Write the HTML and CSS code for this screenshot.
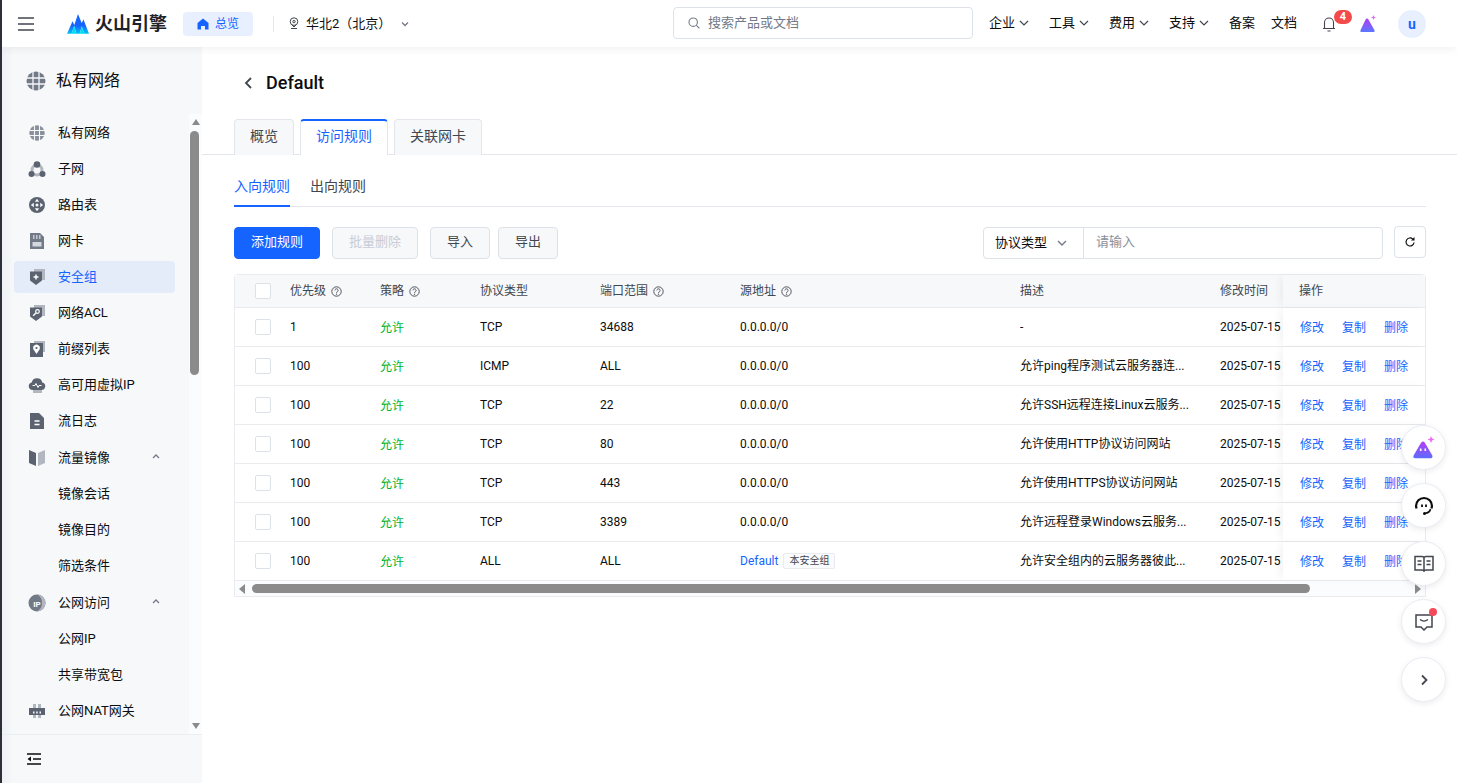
FILE: index.html
```html
<!DOCTYPE html>
<html lang="zh-CN">
<head>
<meta charset="utf-8">
<title>Default - 安全组</title>
<link rel="stylesheet" href="styles.css">
</head>
<body>
<div class="app">
  <header class="topbar">
    <svg class="burger" width="16" height="14" viewBox="0 0 16 14"><path d="M0 1h16M0 7h16M0 13h16" stroke="#42464e" stroke-width="1.400" fill="none"/></svg>
    <div class="logo">
      <svg width="24" height="22" viewBox="0 0 24 22"><defs><linearGradient id="lg" x1="0" y1="0" x2="0" y2="1"><stop offset="0" stop-color="#1664ff"/><stop offset=".6" stop-color="#1664ff"/><stop offset="1" stop-color="#00c8f5"/></linearGradient></defs><path d="M0 21.500 6 8l2 4 4-12 4 10 2-4 6 15.500h-5l-3-8-2 8H10L8 13l-3 8.500z" fill="url(#lg)"/><path d="M5 21.500 8 13l2 8.500zM14 21.500l2-8 3 8z" fill="#00dcf0"/></svg>
      <span class="logo-text">火山引擎</span>
    </div>
    <a class="home-pill">
      <svg width="12" height="12" viewBox="0 0 12 12"><path d="M6 .5 11.500 5v6.500H8V8H4v3.500H.5V5z" fill="#1664ff"/></svg>
      <span>总览</span>
    </a>
    <span class="vline"></span>
    <div class="region">
      <svg width="10" height="13" viewBox="0 0 10 13"><circle cx="5" cy="4.600" r="3.800" fill="none" stroke="#42464e" stroke-width="1"/><circle cx="5" cy="4.600" r="1.200" fill="none" stroke="#42464e"/><path d="M2 11.500h6" stroke="#42464e"/><path d="M3 8 5 10l2-2" fill="none" stroke="#42464e"/></svg>
      <span>华北2（北京）</span>
      <svg class="region-caret" width="8" height="6" viewBox="0 0 8 6"><path d="M1 1.500 4 4.500l3-3" fill="none" stroke="#737a87" stroke-width="1.300"/></svg>
    </div>
    <div class="search">
      <svg width="12" height="12" viewBox="0 0 12 12"><circle cx="5.200" cy="5.200" r="4.200" fill="none" stroke="#737a87" stroke-width="1.100"/><path d="m8.400 8.400 3 3" stroke="#737a87" stroke-width="1.100"/></svg>
      <span>搜索产品或文档</span>
    </div>
    <nav class="topnav">
      <a>企业<svg width="10" height="6" viewBox="0 0 10 6"><path d="m1 1 4 4 4-4" fill="none" stroke="#42464e" stroke-width="1.200"/></svg></a>
      <a>工具<svg width="10" height="6" viewBox="0 0 10 6"><path d="m1 1 4 4 4-4" fill="none" stroke="#42464e" stroke-width="1.200"/></svg></a>
      <a>费用<svg width="10" height="6" viewBox="0 0 10 6"><path d="m1 1 4 4 4-4" fill="none" stroke="#42464e" stroke-width="1.200"/></svg></a>
      <a>支持<svg width="10" height="6" viewBox="0 0 10 6"><path d="m1 1 4 4 4-4" fill="none" stroke="#42464e" stroke-width="1.200"/></svg></a>
      <a class="plain">备案</a>
      <a class="plain">文档</a>
    </nav>
    <div class="bell">
      <svg width="14" height="16" viewBox="0 0 14 16"><path d="M1 12.500h12M2.500 12.500V6.500a4.500 4.500 0 0 1 9 0v6M5.500 15h3" fill="none" stroke="#42464e" stroke-width="1.100"/></svg>
      <span class="badge">4</span>
    </div>
    <svg class="ai-top" width="18" height="18" viewBox="0 0 18 18"><defs><linearGradient id="g1" x1="0" y1="0" x2="0" y2="1"><stop offset="0" stop-color="#b23cf0"/><stop offset="1" stop-color="#5a78ff"/></linearGradient></defs><path d="M8 3.500c.6 0 1 .3 1.300.8l6.200 10.900c.4.800 0 1.800-1 1.800H2.500c-1 0-1.400-1-1-1.800L6.700 4.300c.3-.5.700-.8 1.300-.8z" fill="url(#g1)"/><path d="M14.500 0l.7 1.800 1.800.7-1.800.7-.7 1.800-.7-1.800-1.800-.7 1.800-.7z" fill="#e06cf5"/></svg>
    <span class="avatar">u</span>
  </header>

  <div class="body-row">
    <aside class="sidebar">
      <div class="side-title">
        <svg width="20" height="20" viewBox="0 0 20 20"><circle cx="10" cy="10" r="9.500" fill="#737a87"/><path d="M0 7h20M0 13h20M7 0v20M13 0v20" stroke="#f6f8fa" stroke-width="1.300"/></svg>
        <span>私有网络</span>
      </div>
      <div class="side-scroll">
        <ul class="menu">
          <li class="item"><svg width="18" height="18" viewBox="0 0 18 18"><circle cx="9" cy="9" r="7.700" fill="#8a909b"/><path d="M1 6.500h16M1 11.500h16M6.500 1v16M11.500 1v16" stroke="#f6f8fa" stroke-width="1.100"/></svg><span>私有网络</span></li>
          <li class="item"><svg width="18" height="18" viewBox="0 0 18 18"><circle cx="9" cy="10" r="5" fill="none" stroke="#b1b6bf" stroke-width="3"/><circle cx="9" cy="4.500" r="3.300" fill="#5c6370"/><circle cx="3.500" cy="14" r="3" fill="#5c6370"/><circle cx="14.500" cy="14" r="3" fill="#5c6370"/></svg><span>子网</span></li>
          <li class="item"><svg width="18" height="18" viewBox="0 0 18 18"><circle cx="9" cy="9" r="8" fill="#5c6370"/><path d="M9 2.800 11.200 5.800H6.800zM9 15.200l2.200-3H6.800zM2.800 9l3-2.200v4.400zM15.200 9l-3-2.200v4.400z" fill="#f6f8fa"/><circle cx="9" cy="9" r="1.500" fill="#f6f8fa"/></svg><span>路由表</span></li>
          <li class="item"><svg width="18" height="18" viewBox="0 0 18 18"><path d="M2 1h10l4 4v12H2z" fill="#737a87"/><path d="M4.500 10h9v4.500h-9z" fill="#d5d8dd"/><path d="M5 3h1.500v4H5zM8 3h1.500v4H8zM11 3h1.500v4H11z" fill="#c5c9d0"/></svg><span>网卡</span></li>
          <li class="item active"><svg width="18" height="18" viewBox="0 0 18 18"><path d="M6 1h11v11H6z" fill="#b1b6bf"/><path d="M2 3.500h12v9L8 17l-6-4.500z" fill="#5c6370"/><path d="M5.500 9h5M8 6.500v5" stroke="#fff" stroke-width="1.500"/></svg><span>安全组</span></li>
          <li class="item"><svg width="18" height="18" viewBox="0 0 18 18"><path d="M6 1h11v11H6z" fill="#b1b6bf"/><path d="M2 3.500h12v9L8 17l-6-4.500z" fill="#5c6370"/><circle cx="9.500" cy="7.500" r="1.800" fill="none" stroke="#fff" stroke-width="1.200"/><path d="M8.200 8.800 5.200 11.800" stroke="#fff" stroke-width="1.400"/></svg><span>网络ACL</span></li>
          <li class="item"><svg width="18" height="18" viewBox="0 0 18 18"><path d="M6 1h11v11H6z" fill="#b1b6bf"/><path d="M2 3h13v14H2z" fill="#5c6370"/><path d="M8.500 14 5.500 9.500a3.400 3.400 0 1 1 6 0z" fill="#fff"/><circle cx="8.500" cy="8" r="1.100" fill="#5c6370"/></svg><span>前缀列表</span></li>
          <li class="item"><svg width="18" height="18" viewBox="0 0 18 18"><path d="M5 14h9v3H5z" fill="#b1b6bf"/><path d="M4.500 14a3.800 3.800 0 0 1-.8-7.500 5.400 5.400 0 0 1 10.600 0A3.800 3.800 0 0 1 13.500 14z" fill="#5c6370"/><path d="M4.500 9.500h2.500l1-2 2 4 1-2h2.500" fill="none" stroke="#fff" stroke-width="1"/></svg><span>高可用虚拟IP</span></li>
          <li class="item"><svg width="18" height="18" viewBox="0 0 18 18"><path d="M2 1h9l5 5v11H2z" fill="#5c6370"/><path d="M6.500 9h5M6.500 12.500h5" stroke="#fff" stroke-width="1.300"/></svg><span>流日志</span></li>
          <li class="item parent"><svg width="18" height="18" viewBox="0 0 18 18"><path d="M1 1l7 3v13l-7-3z" fill="#5c6370"/><path d="M17 1l-7 3v13l7-3z" fill="#b1b6bf"/></svg><span>流量镜像</span><svg class="fold" width="8" height="5" viewBox="0 0 8 5"><path d="M1 4 4 1l3 3" fill="none" stroke="#737a87" stroke-width="1.300"/></svg></li>
          <li class="item sub"><span>镜像会话</span></li>
          <li class="item sub"><span>镜像目的</span></li>
          <li class="item sub"><span>筛选条件</span></li>
          <li class="item parent"><svg width="18" height="18" viewBox="0 0 18 18"><circle cx="9" cy="9" r="8.500" fill="#737a87"/><path d="M9 .5a8.500 8.500 0 0 1 0 17c3-2 5-4 5-8.500S12 2 9 .5z" fill="#b1b6bf"/><text x="9" y="12.500" class="ip-mark">IP</text></svg><span>公网访问</span><svg class="fold" width="8" height="5" viewBox="0 0 8 5"><path d="M1 4 4 1l3 3" fill="none" stroke="#737a87" stroke-width="1.300"/></svg></li>
          <li class="item sub"><span>公网IP</span></li>
          <li class="item sub"><span>共享带宽包</span></li>
          <li class="item"><svg width="18" height="18" viewBox="0 0 18 18"><path d="M5 2h3v14H5zM10 2h3v14h-3z" fill="#b1b6bf"/><path d="M1 6h16v7H1z" fill="#5c6370"/><path d="M5 9.500h1.500v2H5zM8.200 9.500h1.500v2H8.200zM11.500 9.500H13v2h-1.500z" fill="#f6f8fa"/></svg><span>公网NAT网关</span></li>
        </ul>
        <div class="side-bar">
          <i class="arrow up"></i>
          <div class="side-track"><div class="side-thumb"></div></div>
          <i class="arrow down"></i>
        </div>
      </div>
      <div class="side-foot">
        <svg width="14" height="12" viewBox="0 0 14 12"><path d="M0 1h14M6 6h8M0 11h14" stroke="#0c0d0e" stroke-width="1.300"/><path d="M4 3.500v5L.5 6z" fill="#0c0d0e"/></svg>
      </div>
    </aside>

    <main class="main">
      <div class="page-head">
        <svg width="9" height="12" viewBox="0 0 9 12"><path d="M7 1 2 6l5 5" fill="none" stroke="#42464e" stroke-width="1.800"/></svg>
        <h1>Default</h1>
      </div>
      <div class="tabs">
        <a class="tab tab-s">概览</a>
        <a class="tab on">访问规则</a>
        <a class="tab">关联网卡</a>
      </div>
      <div class="content">
        <div class="subtabs">
          <a class="subtab on">入向规则</a>
          <a class="subtab">出向规则</a>
        </div>
        <div class="toolbar">
          <button class="btn primary">添加规则</button>
          <button class="btn disabled">批量删除</button>
          <button class="btn short">导入</button>
          <button class="btn short">导出</button>
          <div class="filter">
            <div class="filter-sel"><span>协议类型</span><svg width="10" height="6" viewBox="0 0 10 6"><path d="m1 1 4 4 4-4" fill="none" stroke="#737a87" stroke-width="1.400"/></svg></div>
            <div class="filter-in">请输入</div>
          </div>
          <button class="refresh"><svg width="12" height="12" viewBox="0 0 12 12"><path d="M10 6.500A4 4 0 1 1 8.700 3" fill="none" stroke="#0c0d0e" stroke-width="1.200"/><path d="M10.500 1v3.500H7z" fill="#0c0d0e"/></svg></button>
        </div>

        <div class="table">
          <div class="row head">
            <div class="c-check"><i class="box"></i></div>
            <div class="cell">优先级<svg class="q" width="11" height="11" viewBox="0 0 11 11"><use href="#qm"/></svg></div>
            <div class="cell">策略<svg class="q" width="11" height="11" viewBox="0 0 11 11"><use href="#qm"/></svg></div>
            <div class="cell">协议类型</div>
            <div class="cell">端口范围<svg class="q" width="11" height="11" viewBox="0 0 11 11"><use href="#qm"/></svg></div>
            <div class="cell">源地址<svg class="q" width="11" height="11" viewBox="0 0 11 11"><use href="#qm"/></svg></div>
            <div class="cell">描述</div>
            <div class="cell">修改时间</div>
            <div class="ops head-ops">操作</div>
          </div>
          <div class="row">
            <div class="c-check"><i class="box"></i></div><div class="cell">1</div><div class="cell ok">允许</div><div class="cell">TCP</div><div class="cell">34688</div><div class="cell">0.0.0.0/0</div><div class="cell">-</div><div class="cell">2025-07-15</div>
            <div class="ops"><a>修改</a><a>复制</a><a>删除</a></div>
          </div>
          <div class="row">
            <div class="c-check"><i class="box"></i></div><div class="cell">100</div><div class="cell ok">允许</div><div class="cell">ICMP</div><div class="cell">ALL</div><div class="cell">0.0.0.0/0</div><div class="cell">允许ping程序测试云服务器连...</div><div class="cell">2025-07-15</div>
            <div class="ops"><a>修改</a><a>复制</a><a>删除</a></div>
          </div>
          <div class="row">
            <div class="c-check"><i class="box"></i></div><div class="cell">100</div><div class="cell ok">允许</div><div class="cell">TCP</div><div class="cell">22</div><div class="cell">0.0.0.0/0</div><div class="cell">允许SSH远程连接Linux云服务...</div><div class="cell">2025-07-15</div>
            <div class="ops"><a>修改</a><a>复制</a><a>删除</a></div>
          </div>
          <div class="row">
            <div class="c-check"><i class="box"></i></div><div class="cell">100</div><div class="cell ok">允许</div><div class="cell">TCP</div><div class="cell">80</div><div class="cell">0.0.0.0/0</div><div class="cell">允许使用HTTP协议访问网站</div><div class="cell">2025-07-15</div>
            <div class="ops"><a>修改</a><a>复制</a><a>删除</a></div>
          </div>
          <div class="row">
            <div class="c-check"><i class="box"></i></div><div class="cell">100</div><div class="cell ok">允许</div><div class="cell">TCP</div><div class="cell">443</div><div class="cell">0.0.0.0/0</div><div class="cell">允许使用HTTPS协议访问网站</div><div class="cell">2025-07-15</div>
            <div class="ops"><a>修改</a><a>复制</a><a>删除</a></div>
          </div>
          <div class="row">
            <div class="c-check"><i class="box"></i></div><div class="cell">100</div><div class="cell ok">允许</div><div class="cell">TCP</div><div class="cell">3389</div><div class="cell">0.0.0.0/0</div><div class="cell">允许远程登录Windows云服务...</div><div class="cell">2025-07-15</div>
            <div class="ops"><a>修改</a><a>复制</a><a>删除</a></div>
          </div>
          <div class="row">
            <div class="c-check"><i class="box"></i></div><div class="cell">100</div><div class="cell ok">允许</div><div class="cell">ALL</div><div class="cell">ALL</div><div class="cell"><a class="link">Default</a><span class="tag">本安全组</span></div><div class="cell">允许安全组内的云服务器彼此...</div><div class="cell">2025-07-15</div>
            <div class="ops"><a>修改</a><a>复制</a><a>删除</a></div>
          </div>
          <div class="hscroll">
            <i class="arrow left"></i>
            <div class="h-track"><div class="h-thumb"></div></div>
            <i class="arrow right"></i>
          </div>
        </div>
      </div>
    </main>
  </div>

  <div class="floats">
    <a class="fab"><svg width="26" height="26" viewBox="0 0 26 26"><defs><linearGradient id="g2" x1="0" y1="0" x2="0" y2="1"><stop offset="0" stop-color="#b93cf2"/><stop offset="1" stop-color="#5a6cff"/></linearGradient></defs><path d="M10 7 1 23h6z" fill="#bfeefb"/><path d="M12 6.500c.8 0 1.300.4 1.700 1l7.500 12.800c.8 1.400 0 3-1.500 3H4.300c-1.500 0-2.300-1.600-1.500-3l7.500-12.800c.4-.6.900-1 1.700-1z" fill="url(#g2)"/><path d="M9.700 13.500v2.500M14.300 13.500v2.500" stroke="#fff" stroke-width="1.600"/><path d="M20 1l1 2.600 2.600 1-2.600 1L20 8.200l-1-2.600-2.600-1 2.600-1z" fill="#e86cf5"/></svg></a>
    <a class="fab"><svg width="20" height="20" viewBox="0 0 20 20"><path d="M2.500 12.500 2 10a8 8 0 0 1 16 0l-.5 2.500" fill="none" stroke="#0c0d0e" stroke-width="2.200"/><path d="M16.500 13c-.5 2.500-2.500 4-5.500 4.300" fill="none" stroke="#0c0d0e" stroke-width="1.600"/><circle cx="10.500" cy="17.500" r="1.500" fill="#0c0d0e"/><path d="M8 8.500v2.500M12 8.500v2.500" stroke="#0c0d0e" stroke-width="1.800"/></svg></a>
    <a class="fab"><svg width="20" height="18" viewBox="0 0 20 18"><path d="M1 1.500h7a2 2 0 0 1 2 2v13a2 2 0 0 0-2-1.500H1zM19 1.500h-7a2 2 0 0 0-2 2v13a2 2 0 0 1 2-1.500h7z" fill="none" stroke="#42464e" stroke-width="1.500"/><path d="M3.500 6h4M3.500 9.500h4M12.500 6h4M12.500 9.500h4" stroke="#42464e" stroke-width="1.300"/></svg></a>
    <a class="fab"><svg width="18" height="18" viewBox="0 0 18 18"><path d="M1 2h16v12h-5l-3 3-3-3H1z" fill="none" stroke="#42464e" stroke-width="1.500"/><path d="M5 6.500c2.500 2 5.500 2 8 0" fill="none" stroke="#42464e" stroke-width="1.400"/></svg><i class="dot"></i></a>
    <a class="fab"><svg width="8" height="12" viewBox="0 0 8 12"><path d="m2 1.500 4.500 4.500L2 10.500" fill="none" stroke="#42464e" stroke-width="1.800"/></svg></a>
  </div>
  <svg class="defs" width="0" height="0"><symbol id="qm" viewBox="0 0 11 11"><circle cx="5.500" cy="5.500" r="4.700" fill="none" stroke="#42464e" stroke-width=".9"/><path d="M3.900 4.400a1.600 1.600 0 1 1 2.400 1.400c-.6.300-.8.600-.8 1.100" fill="none" stroke="#42464e" stroke-width=".9"/><circle cx="5.500" cy="8.200" r=".6" fill="#42464e"/></symbol></svg>
</div>
</body>
</html>
```
FILE: styles.css
```css
* { box-sizing: border-box; }
html, body { margin: 0; height: 100%; overflow: hidden; }
body {
  font-family: Roboto, "Noto Sans CJK SC", sans-serif;
  font-size: 12px;
  line-height: 20px;
  color: #0c0d0e;
  background: #fff;
}
a { text-decoration: none; color: inherit; }
ul { list-style: none; margin: 0; padding: 0; }
i { display: block; }
.app {
  position: relative;
  width: 1457px;
  height: 783px;
  display: flex;
  flex-direction: column;
  overflow: hidden;
  border-left: 2px solid #2c2f3a;
}
.defs { position: absolute; }

/* top bar */
.topbar {
  height: 47px;
  flex: none;
  display: flex;
  align-items: center;
  background: #fff;
  box-shadow: 0 2px 8px rgba(0, 0, 0, .06);
  position: relative;
  z-index: 2;
}
.burger { margin-left: 16px; }
.logo { display: flex; align-items: center; margin-left: 33px; gap: 6px; width: 100px; }
.logo-text { font-size: 18px; font-weight: 700; color: #1d2129; white-space: nowrap; }
.home-pill {
  width: 70px; height: 24px; margin-left: 16px;
  display: flex; align-items: center; justify-content: center; gap: 6px;
  background: #e8f0ff; border-radius: 4px;
  color: #1664ff; font-size: 12px;
}
.vline { width: 1px; height: 16px; background: #e3e6eb; margin-left: 20px; }
.region { display: flex; align-items: center; margin-left: 15px; font-size: 13px; color: #0c0d0e; width: 380px; }
.region span { margin-left: 7px; width: 91px; white-space: nowrap; }
.region-caret { margin-left: 4px; }
.search {
  width: 300px; height: 32px;
  display: flex; align-items: center; gap: 8px; padding-left: 14px;
  border: 1px solid #dde2e9; border-radius: 4px;
  color: #737a87; font-size: 13px;
  margin: -1px 0 0 4px;
}
.topnav { display: flex; align-items: center; margin-left: 16px; font-size: 13px; }
.topnav a { display: flex; align-items: center; gap: 4px; width: 60px; padding-bottom: 2px; white-space: nowrap; color: #0c0d0e; }
.topnav .plain { width: 42px; }
.bell { position: relative; display: flex; margin-left: 9px; }
.badge {
  position: absolute; left: 12px; top: -6px;
  width: 18px; height: 14px; border-radius: 7px;
  background: #f54a4a; color: #fff;
  font-size: 11px; font-weight: 700; line-height: 14px; text-align: center;
}
.ai-top { margin-left: 23px; }
.avatar {
  width: 28px; height: 28px; margin-left: 21px; border-radius: 50%;
  background: #e8f0ff; color: #1664ff;
  font-size: 14px; font-weight: 700; text-align: center; line-height: 28px;
}

.body-row { flex: 1; display: flex; min-height: 0; }

/* sidebar */
.sidebar {
  width: 200px; flex: none;
  display: flex; flex-direction: column;
  background: linear-gradient(90deg, #eef1f5 0, #f6f8fa 12px);
}
.side-title {
  height: 67px; flex: none;
  display: flex; align-items: center; gap: 10px;
  padding: 0 0 0 24px;
  font-size: 16px;
}
.side-scroll { flex: 1; display: flex; min-height: 0; }
.menu { flex: 1; min-width: 0; overflow: hidden; padding: 1px 14px 0 12px; }
.item {
  height: 36px; display: flex; align-items: center; padding-left: 14px; gap: 12px;
  font-size: 13px; color: #0c0d0e; position: relative; white-space: nowrap;
}
.item svg { flex: none; }
.item span { display: block; }
.item .fold { position: absolute; right: 15px; top: 15px; }
.item.parent { height: 37px; padding-top: 1px; }
.item.sub { padding-left: 44px; }
.item.active { height: 32px; margin: 2px 0; background: #e5ecf9; border-radius: 4px; color: #1664ff; }
.side-bar { width: 13px; flex: none; display: flex; flex-direction: column; align-items: center; background: #fbfcfd; }
.side-track { flex: 1; width: 100%; padding: 0 1px; }
.side-thumb { width: 9px; height: 244px; background: #8b8b8b; border-radius: 4.500px; margin-top: 6px; }
.arrow { width: 0; height: 0; flex: none; border-style: solid; border-color: transparent; }
.arrow.up { border-width: 0 4.500px 6px; border-bottom-color: #8b8b8b; margin-top: 5px; }
.arrow.down { border-width: 6px 4.500px 0; border-top-color: #8b8b8b; margin-bottom: 5px; }
.arrow.left { border-width: 5px 6px 5px 0; border-right-color: #8b8b8b; margin-left: 4px; }
.arrow.right { border-width: 5px 0 5px 6px; border-left-color: #8b8b8b; margin-right: 4px; }
.side-foot {
  height: 49px; flex: none; border-top: 1px solid #eaedf1;
  display: flex; align-items: center; padding-left: 25px;
}

/* main */
.main { flex: 1; min-width: 0; display: flex; flex-direction: column; }
.page-head { height: 72px; flex: none; display: flex; align-items: center; gap: 13px; padding-left: 42px; }
.page-head h1 { margin: 0; font-size: 18px; font-weight: 500; line-height: 72px; }
.tabs { display: flex; gap: 6px; height: 36px; flex: none; padding-left: 32px; border-bottom: 1px solid #e3e6eb; }
.tab {
  width: 88px; height: 36px; display: flex; align-items: center; justify-content: center;
  padding-bottom: 4px;
  font-size: 14px; color: #42464e;
  background: #f6f8fa; border: 1px solid #e3e6eb; border-bottom: 0; border-radius: 4px 4px 0 0;
}
.tab-s { width: 60px; }
.tab.on { background: #fff; color: #1664ff; border-top: 2px solid #1664ff; }
.content { flex: 1; padding: 16px 31px 0 32px; min-height: 0; }
.subtabs { display: flex; gap: 20px; height: 36px; border-bottom: 1px solid #e3e6eb; }
.subtab { height: 36px; font-size: 14px; line-height: 30px; color: #42464e; }
.subtab.on { color: #1664ff; border-bottom: 2px solid #1664ff; }
.toolbar { display: flex; align-items: flex-start; margin-top: 20px; height: 47px; }
.btn {
  height: 32px; width: 86px; margin-right: 12px; padding: 0 0 2px;
  font: 13px/20px Roboto, "Noto Sans CJK SC", sans-serif;
  background: #f6f8fa; color: #42464e; border: 1px solid #dde2e9; border-radius: 4px;
}
.btn.primary { background: #1664ff; color: #fff; border-color: #1664ff; }
.btn.disabled { background: #f6f8fa; color: #c7ccd6; }
.btn.short { width: 60px; margin-right: 8px; }
.filter { margin-left: auto; width: 400px; height: 32px; display: flex; border: 1px solid #dde2e9; border-radius: 4px; }
.filter-sel { width: 100px; flex: none; display: flex; align-items: center; gap: 10px; padding-left: 11px; border-right: 1px solid #dde2e9; font-size: 13px; }
.filter-in { flex: 1; padding-left: 12px; line-height: 28px; font-size: 13px; color: #8a909b; }
.refresh {
  width: 32px; height: 32px; margin: -1px 0 0 11px; padding: 0;
  display: flex; align-items: center; justify-content: center;
  background: #fff; border: 1px solid #dde2e9; border-radius: 4px;
}

/* table */
.table { border: 1px solid #e9ebef; border-radius: 4px 4px 0 0; width: 1192px; }
.row {
  display: grid;
  grid-template-columns: 55px 90px 100px 120px 140px 280px 200px 63px 1fr;
  height: 39px; align-items: center;
  border-bottom: 1px solid #e9ebef;
  font-size: 12px;
}
.row.head { height: 33px; background: #f6f8fa; color: #42464e; }
.c-check { padding-left: 20px; }
.box { width: 16px; height: 16px; background: #fff; border: 1px solid #dde2e9; border-radius: 2px; }
.cell { display: flex; align-items: center; white-space: nowrap; overflow: hidden; }
.q { margin-left: 5px; flex: none; }
.ok { color: #00b42a; padding-top: 2px; }
.link { color: #1664ff; }
.tag {
  margin-left: 5px; height: 16px; padding: 0 5px;
  border: 1px solid #e9ebef; border-radius: 2px; background: #fafbfc;
  font-size: 10px; line-height: 14px; color: #42464e;
}
.ops {
  height: 100%; display: flex; align-items: center; gap: 18px; padding: 2px 0 0 17px;
  background: #fff; box-shadow: -5px 0 8px -2px rgba(0, 0, 0, .05);
  color: #1664ff;
}
.ops.head-ops { background: #f6f8fa; padding: 0 0 0 16px; color: #42464e; }
.hscroll { height: 15px; display: flex; align-items: center; background: #fbfcfd; }
.h-track { flex: 1; padding: 0 2px; }
.h-thumb { width: 1058px; height: 9px; background: #8b8b8b; border-radius: 4.500px; margin-left: 5px; }

/* floating buttons */
.floats { position: absolute; left: 1399px; top: 425px; display: flex; flex-direction: column; gap: 13px; z-index: 3; }
.fab {
  width: 45px; height: 45px; border-radius: 50%;
  position: relative;
  display: flex; align-items: center; justify-content: center;
  background: #fff; border: 1px solid #eaedf4;
  box-shadow: 0 2px 6px rgba(0, 0, 40, .08);
}
.dot { position: absolute; right: 8px; top: 8px; width: 8px; height: 8px; border-radius: 50%; background: #f54a5a; }
.ip-mark { font: 700 8px Roboto, sans-serif; fill: #fff; text-anchor: middle; }
```
